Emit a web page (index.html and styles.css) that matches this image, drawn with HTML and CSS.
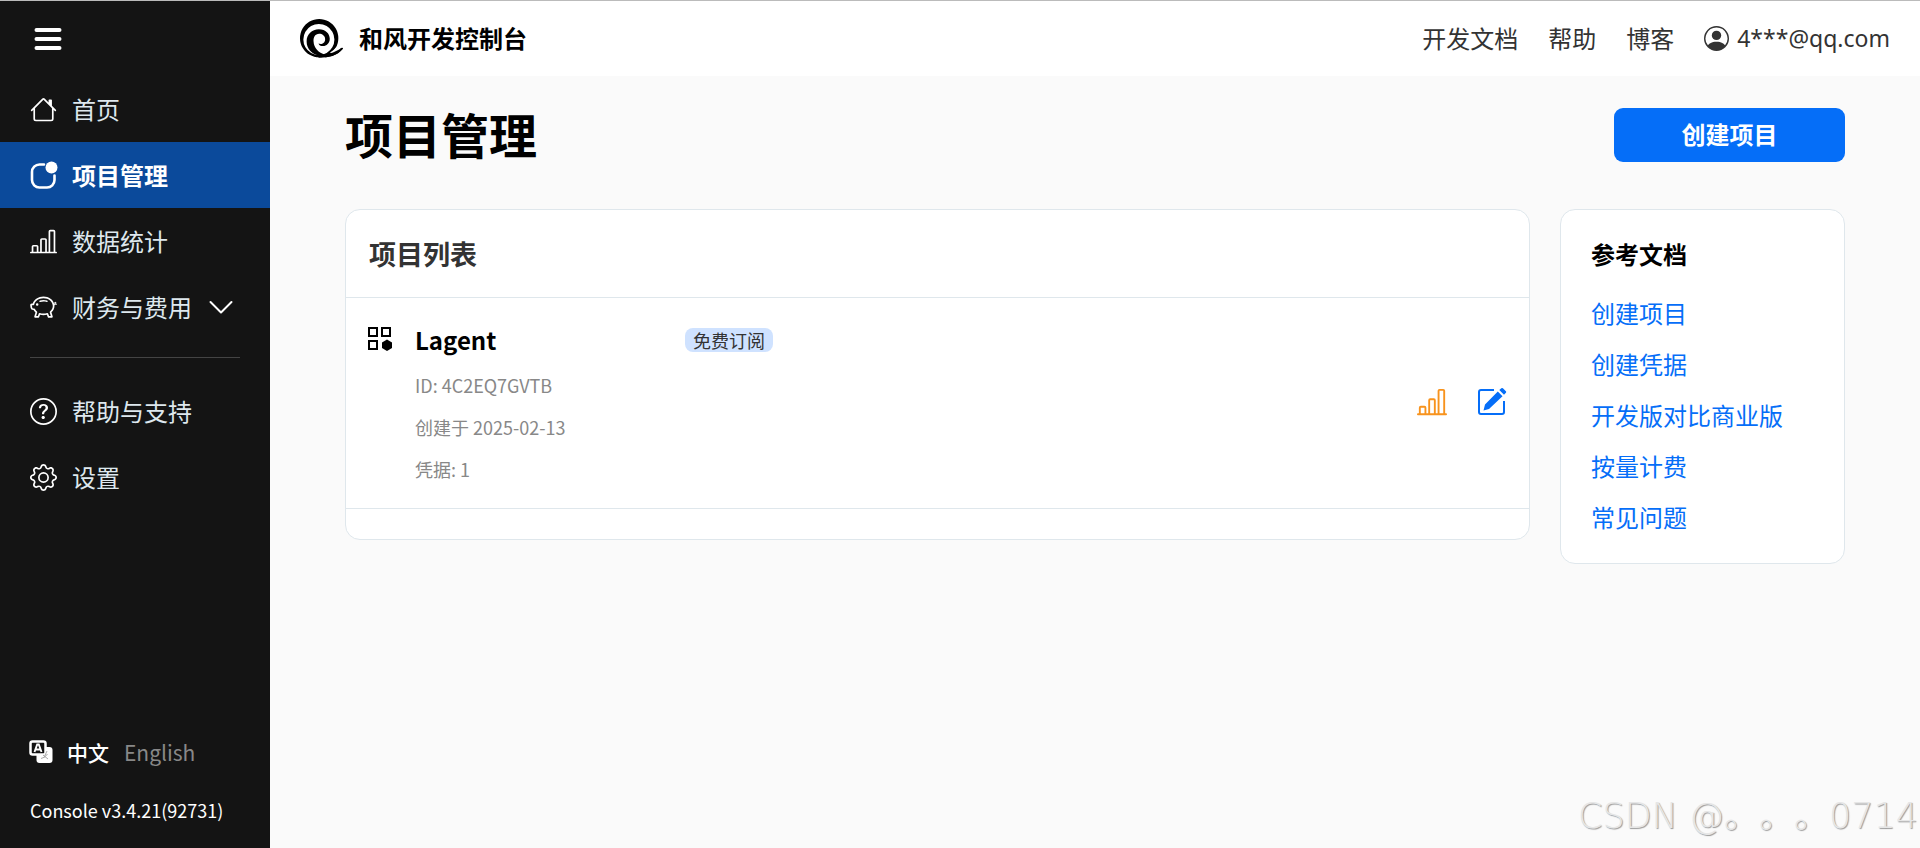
FILE: index.html
```html
<!DOCTYPE html>
<html lang="zh-CN">
<head>
<meta charset="utf-8">
<meta name="viewport" content="width=device-width, initial-scale=1">
<title>项目管理 - 和风开发控制台</title>
<link rel="stylesheet" href="styles.css">
</head>
<body>
<div class="app">
  <aside class="sidebar">
    <button class="menu-toggle" type="button" aria-label="菜单">
      <svg viewBox="0 0 28 24" width="28" height="24" fill="none" stroke="currentColor" stroke-width="4" stroke-linecap="round"><path d="M2.500 3H25.500M2.500 12H25.500M2.500 21H25.500"/></svg>
    </button>
    <nav class="side-nav">
      <a class="side-link" href="#"><svg class="icon" viewBox="0 0 16 16"><path d="M8.707 1.500a1 1 0 0 0-1.414 0L.646 8.146a.5.5 0 0 0 .708.708L2 8.207V13.500A1.500 1.500 0 0 0 3.500 15h9a1.500 1.500 0 0 0 1.500-1.500V8.207l.646.647a.5.5 0 0 0 .708-.708L13 5.793V2.500a.5.5 0 0 0-.5-.5h-1a.5.5 0 0 0-.5.5v1.293zM13 7.207V13.500a.5.5 0 0 1-.5.5h-9a.5.5 0 0 1-.5-.5V7.207l5-5z"/></svg>首页</a>
      <a class="side-link active" href="#" aria-current="page"><svg class="icon" viewBox="0 0 27 27"><path d="M14 2.500H9.500A7.500 7.500 0 0 0 2 10v8a7.500 7.500 0 0 0 7.500 7.500h7.500A7.500 7.500 0 0 0 24.500 18v-4.500" fill="none" stroke="currentColor" stroke-width="2.600" stroke-linecap="round"/><circle cx="21.500" cy="5.500" r="6"/></svg>项目管理</a>
      <a class="side-link" href="#"><svg class="icon" viewBox="0 0 16 16"><path d="M11 2a1 1 0 0 1 1-1h2a1 1 0 0 1 1 1v12h.5a.5.5 0 0 1 0 1H.5a.5.5 0 0 1 0-1H1v-3a1 1 0 0 1 1-1h2a1 1 0 0 1 1 1v3h1V7a1 1 0 0 1 1-1h2a1 1 0 0 1 1 1v7h1zm1 12h2V2h-2zm-3 0V7H7v7zm-5 0v-3H2v3z"/></svg>数据统计</a>
      <a class="side-link" href="#"><svg class="icon" viewBox="0 0 16 16"><path d="M5 6.250a.75.75 0 1 1-1.500 0 .75.75 0 0 1 1.500 0m1.138-1.496A6.600 6.600 0 0 1 7.964 4.500c.666 0 1.303.097 1.893.273a.5.5 0 0 0 .286-.958A7.600 7.600 0 0 0 7.964 3.500c-.734 0-1.441.103-2.102.292a.5.5 0 1 0 .276.962"/><path fill-rule="evenodd" d="M7.964 1.527c-2.977 0-5.571 1.704-6.320 4.125h-.55A1 1 0 0 0 .11 6.824l.254 1.460a1.500 1.500 0 0 0 1.478 1.243h.263c.3.513.688.978 1.145 1.382l-.729 2.477a.5.5 0 0 0 .48.641h2a.5.5 0 0 0 .471-.332l.482-1.351c.635.173 1.310.267 2.011.267.707 0 1.388-.095 2.028-.272l.543 1.372a.5.5 0 0 0 .465.316h2a.5.5 0 0 0 .478-.645l-.761-2.506C13.810 9.895 14.500 8.559 14.500 7.069q0-.218-.02-.431c.261-.11.508-.266.705-.444.315.306.815.306.815-.417 0 .223-.5.223-.461-.026a1 1 0 0 0 .09-.255.7.7 0 0 0-.202-.645.58.58 0 0 0-.707-.098.74.74 0 0 0-.375.562c-.024.243.082.48.32.654a2 2 0 0 1-.259.153c-.534-2.664-3.284-4.595-6.442-4.595M2.516 6.260c.455-2.066 2.667-3.733 5.448-3.733 3.146 0 5.536 2.114 5.536 4.542 0 1.254-.624 2.410-1.670 3.248a.5.5 0 0 0-.165.535l.66 2.175h-.985l-.59-1.487a.5.5 0 0 0-.629-.288c-.661.23-1.390.359-2.157.359a6.600 6.600 0 0 1-2.157-.359.5.5 0 0 0-.635.304l-.525 1.471h-.979l.633-2.150a.5.5 0 0 0-.17-.534 4.650 4.650 0 0 1-1.284-1.541.5.5 0 0 0-.446-.275h-.56a.5.5 0 0 1-.492-.414l-.254-1.460h.933a.5.5 0 0 0 .488-.393m12.621-.857a.6.6 0 0 1-.098.21l-.044-.025c-.146-.09-.157-.175-.152-.223a.24.24 0 0 1 .117-.173c.049-.027.08-.021.113.012a.2.2 0 0 1 .064.199"/></svg>财务与费用<svg class="chevron" viewBox="0 0 24 24" width="24" height="24" fill="none" stroke="currentColor" stroke-width="2" stroke-linecap="round" stroke-linejoin="round"><path d="M1.500 7L12 17.500L22.500 7"/></svg></a>
      <hr class="divider">
      <a class="side-link" href="#"><svg class="icon" viewBox="0 0 16 16"><path d="M8 15A7 7 0 1 1 8 1a7 7 0 0 1 0 14m0 1A8 8 0 1 0 8 0a8 8 0 0 0 0 16"/><path d="M5.255 5.786a.237.237 0 0 0 .241.247h.825c.138 0 .248-.113.266-.25.09-.656.54-1.134 1.342-1.134.686 0 1.314.343 1.314 1.168 0 .635-.374.927-.965 1.371-.673.489-1.206 1.060-1.168 1.987l.003.217a.25.25 0 0 0 .25.246h.811a.25.25 0 0 0 .25-.25v-.105c0-.718.273-.927 1.010-1.486.609-.463 1.244-.977 1.244-2.056 0-1.511-1.276-2.241-2.673-2.241-1.267 0-2.655.59-2.750 2.286m1.557 5.763c0 .533.425.927 1.010.927.609 0 1.028-.394 1.028-.927 0-.552-.42-.94-1.029-.94-.584 0-1.009.388-1.009.94"/></svg>帮助与支持</a>
      <a class="side-link" href="#"><svg class="icon" viewBox="0 0 16 16"><path d="M8 4.754a3.246 3.246 0 1 0 0 6.492 3.246 3.246 0 0 0 0-6.492M5.754 8a2.246 2.246 0 1 1 4.492 0 2.246 2.246 0 0 1-4.492 0"/><path d="M9.796 1.343c-.527-1.790-3.065-1.790-3.592 0l-.094.319a.873.873 0 0 1-1.255.52l-.292-.16c-1.640-.892-3.433.902-2.540 2.541l.159.292a.873.873 0 0 1-.52 1.255l-.319.094c-1.790.527-1.790 3.065 0 3.592l.319.094a.873.873 0 0 1 .52 1.255l-.16.292c-.892 1.640.901 3.434 2.541 2.540l.292-.159a.873.873 0 0 1 1.255.52l.094.319c.527 1.790 3.065 1.790 3.592 0l.094-.319a.873.873 0 0 1 1.255-.52l.292.16c1.640.893 3.434-.902 2.540-2.541l-.159-.292a.873.873 0 0 1 .52-1.255l.319-.094c1.790-.527 1.790-3.065 0-3.592l-.319-.094a.873.873 0 0 1-.52-1.255l.16-.292c.893-1.640-.902-3.433-2.541-2.540l-.292.159a.873.873 0 0 1-1.255-.52zm-2.633.283c.246-.835 1.428-.835 1.674 0l.094.319a1.873 1.873 0 0 0 2.693 1.115l.291-.16c.764-.415 1.600.42 1.184 1.185l-.159.292a1.873 1.873 0 0 0 1.116 2.692l.318.094c.835.246.835 1.428 0 1.674l-.319.094a1.873 1.873 0 0 0-1.115 2.693l.16.291c.415.764-.42 1.600-1.185 1.184l-.291-.159a1.873 1.873 0 0 0-2.693 1.116l-.094.318c-.246.835-1.428.835-1.674 0l-.094-.319a1.873 1.873 0 0 0-2.692-1.115l-.292.16c-.764.415-1.600-.42-1.184-1.185l.159-.291A1.873 1.873 0 0 0 1.945 8.930l-.319-.094c-.835-.246-.835-1.428 0-1.674l.319-.094A1.873 1.873 0 0 0 3.060 4.377l-.16-.292c-.415-.764.42-1.600 1.185-1.184l.292.159a1.873 1.873 0 0 0 2.692-1.115z"/></svg>设置</a>
    </nav>
    <div class="side-foot">
      <div class="langs">
        <svg viewBox="0 0 24 24" width="24" height="24"><rect x="7.500" y="7" width="16" height="16" rx="3" fill="#fff"/><rect x="1.500" y="1.500" width="15" height="13" rx="2" fill="#141414" stroke="#fff" stroke-width="2.500"/><path d="M5.500 12L8.200 4.500H9.800L12.500 12M6.800 9.500H11.200" fill="none" stroke="#fff" stroke-width="1.900"/><path d="M18 11L15 17.500M12 18.500Q16 18 18.500 14M14 15L19 19" fill="none" stroke="#aaa" stroke-width="1"/></svg>
        <a class="lang current" href="#">中文</a>
        <a class="lang" href="#">English</a>
      </div>
      <div class="version">Console v3.4.21(92731)</div>
    </div>
  </aside>

  <div class="page">
    <header class="topbar">
      <a class="brand" href="#">
        <svg viewBox="0 0 130 118" width="43" height="39"><path fill-rule="evenodd" d="M58 0A58 58 0 1 1 57.900 0ZM57 15A47 47 0 1 0 57.100 15Z"/><path d="M60 111C35 107 20 90 20 68C20 46 36 31 57 31C78 31 90 45 90 60C90 74 80 82 70 82C62 82 57 79 56 74C64 78 76 74 76 61C76 51 67 45 58 45C46 45 40 56 41 68C42 88 56 102 76 108Z"/><path d="M48 112Q95 109 127 87Q131 87 129 91C112 111 90 117 58 117Z"/><path d="M91 101Q104 93 111 84L124 92L100 110Z" fill="#fff"/><path d="M72 107Q100 105 127 87Q131 87 129 91C112 109 98 114 76 116Z"/></svg>
        <span>和风开发控制台</span>
      </a>
      <nav class="top-nav">
        <a href="#">开发文档</a>
        <a href="#">帮助</a>
        <a href="#">博客</a>
        <a class="account" href="#"><svg viewBox="0 0 16 16" width="25" height="25"><path d="M11 6a3 3 0 1 1-6 0 3 3 0 0 1 6 0"/><path fill-rule="evenodd" d="M0 8a8 8 0 1 1 16 0A8 8 0 0 1 0 8m8-7a7 7 0 0 0-5.468 11.370C3.242 11.226 4.805 10 8 10s4.757 1.225 5.468 2.370A7 7 0 0 0 8 1"/></svg>4***@qq.com</a>
      </nav>
    </header>

    <main class="content">
      <div class="title-row">
        <h1>项目管理</h1>
        <button class="create" type="button">创建项目</button>
      </div>
      <div class="columns">
        <section class="card">
          <h2>项目列表</h2>
          <article class="project">
            <svg class="grid-icon" viewBox="0 0 26 26" width="26" height="26"><path d="M2 3h8v8H2zM15 3h8v8h-8zM2 16h8v8H2z" fill="none" stroke="currentColor" stroke-width="2"/><path d="M20 14.500l5 3v5.500l-5 3l-5-3v-5.500z"/></svg>
            <div class="project-info">
              <div class="name-row"><h3>Lagent</h3><span class="badge">免费订阅</span></div>
              <p>ID: 4C2EQ7GVTB</p>
              <p>创建于 2025-02-13</p>
              <p>凭据: 1</p>
            </div>
            <div class="actions">
              <a class="stats" href="#" aria-label="数据统计"><svg viewBox="0 0 16 16" width="30" height="30"><path d="M11 2a1 1 0 0 1 1-1h2a1 1 0 0 1 1 1v12h.5a.5.5 0 0 1 0 1H.5a.5.5 0 0 1 0-1H1v-3a1 1 0 0 1 1-1h2a1 1 0 0 1 1 1v3h1V7a1 1 0 0 1 1-1h2a1 1 0 0 1 1 1v7h1zm1 12h2V2h-2zm-3 0V7H7v7zm-5 0v-3H2v3z"/></svg></a>
              <a class="edit" href="#" aria-label="编辑"><svg viewBox="0 0 30 30" width="30" height="30"><path d="M17 3H4a2 2 0 0 0-2 2v20a2 2 0 0 0 2 2h21a2 2 0 0 0 2-2V14" fill="none" stroke="currentColor" stroke-width="2"/><path d="M20.800 4.500l4.700 4.700L12 22l-5.500 1.500L8 17.500zM22.300 3l2-1.800q.8-.6 1.600 0l3 3q.7.8 0 1.600L27 7.700z"/></svg></a>
            </div>
          </article>
        </section>
        <aside class="docs">
          <h2>参考文档</h2>
          <a href="#">创建项目</a>
          <a href="#">创建凭据</a>
          <a href="#">开发版对比商业版</a>
          <a href="#">按量计费</a>
          <a href="#">常见问题</a>
        </aside>
      </div>
    </main>
  </div>
</div>
<div class="watermark">CSDN @。。。0714</div>
</body>
</html>
```
FILE: styles.css
```css
* { box-sizing: border-box; }
body {
  margin: 0;
  font: 24px/36px "Noto Sans CJK SC", sans-serif;
  color: #000;
  background: #fafafa;
}
h1, h2, h3, p { margin: 0; }
a { color: inherit; text-decoration: none; }
button { font: inherit; border: 0; cursor: pointer; }
svg { display: block; flex: none; fill: currentColor; }

.app {
  display: flex;
  min-height: 100vh;
  border-top: 1px solid #bbb;
}

.sidebar {
  display: flex;
  flex-direction: column;
  flex: none;
  width: 270px;
  background: #141414;
  color: #fff;
}
.menu-toggle {
  display: flex;
  align-items: center;
  height: 75px;
  padding: 0 34px;
  background: none;
  color: #fff;
}
.menu-toggle svg { fill: none; }
.side-link {
  display: flex;
  align-items: center;
  gap: 15px;
  height: 66px;
  padding: 0 30px;
  color: #dee8ee;
}
.side-link.active {
  background: #0b4a9b;
  color: #fff;
  font-weight: 700;
}
.side-link svg { color: #fff; }
.icon { width: 27px; height: 27px; overflow: visible; }
.chevron { margin-left: 2px; fill: none; }
.divider {
  margin: 17px 30px 20px;
  border: 0;
  border-top: 1px solid #444;
}
.side-foot { margin-top: auto; padding: 0 30px 22px; }
.langs {
  display: flex;
  align-items: center;
  gap: 15px;
  margin-bottom: 24px;
  font-size: 21px;
}
.langs svg { margin: 0 -1px; }
.lang { color: #888; }
.lang.current { color: #fff; font-weight: 500; }
.version { font-size: 18px; line-height: 32px; }

.page { flex: 1; min-width: 0; }
.topbar {
  display: flex;
  align-items: center;
  justify-content: space-between;
  height: 75px;
  padding: 0 30px 1px;
  background: #fff;
}
.brand {
  display: flex;
  align-items: center;
  gap: 16px;
  font-weight: 700;
}
.top-nav { display: flex; gap: 30px; color: #333; }
.account {
  display: flex;
  align-items: center;
  gap: 8px;
  font-family: "Noto Sans", sans-serif;
  font-size: 23px;
}

.content { padding: 32px 75px; }
.title-row {
  display: flex;
  align-items: flex-start;
  justify-content: space-between;
  margin-bottom: 47px;
}
h1 { font-size: 48px; line-height: 50px; }
.create {
  width: 231px;
  height: 54px;
  padding: 0 0 3px;
  border-radius: 9px;
  background: #056ef8;
  color: #fff;
  font-weight: 700;
}
.columns { display: flex; align-items: flex-start; gap: 30px; }
.card, .docs {
  border: 1px solid #dfe7ec;
  border-radius: 15px;
  background: #fff;
}
.card { flex: 1; padding-bottom: 30px; }
.card h2 {
  padding: 24px 23px;
  font-size: 27px;
  line-height: 39px;
  color: #333;
  border-bottom: 1px solid #dfe7ec;
}
.project {
  display: flex;
  gap: 22px;
  padding: 23px 22px 18px 21px;
  border-bottom: 1px solid #dfe7ec;
}
.grid-icon { margin-top: 4px; }
.project-info { flex: 1; }
.name-row { display: flex; align-items: center; margin-bottom: 5px; }
h3 { width: 270px; font-size: 24px; line-height: 38px; }
.badge {
  padding: 0 8px;
  border-radius: 8px;
  background: #cfe2ff;
  color: #333;
  font-size: 18px;
  line-height: 24px;
}
.project p { font-size: 18px; line-height: 42px; color: #888; }
.actions { display: flex; align-items: center; gap: 30px; padding-bottom: 7px; }
.stats { color: #f8931d; }
.edit { color: #056ef8; }
.docs {
  display: flex;
  flex-direction: column;
  gap: 15px;
  width: 285px;
  padding: 26px 30px 28px;
}
.docs h2 { margin-bottom: 8px; font-size: 24px; line-height: 36px; }
.docs a { color: #056ef8; }

.watermark {
  position: absolute;
  right: 2px;
  bottom: 8px;
  font: 200 35px/48px "DejaVu Sans", "Noto Sans CJK SC", sans-serif;
  text-spacing-trim: space-all;
  color: #e6e6e6;
  text-shadow: 1px 1px 1px #999;
  pointer-events: none;
}
```
